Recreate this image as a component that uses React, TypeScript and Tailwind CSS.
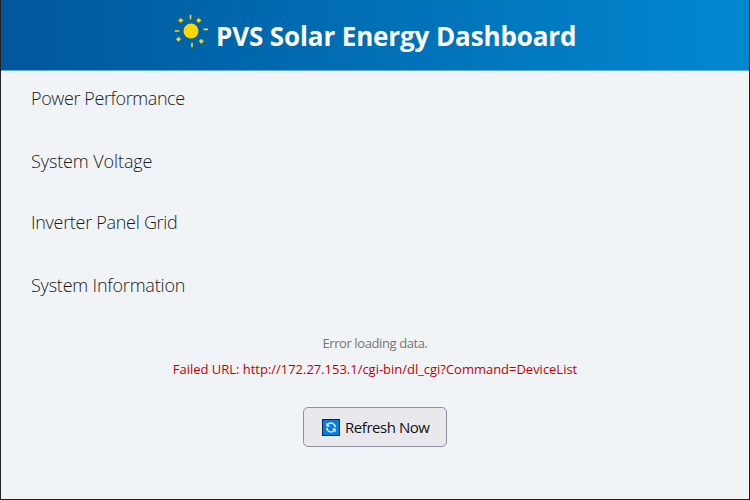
const sections = [
  { title: "Power Performance", style: "h-[63px] tracking-[-0.4px]" },
  { title: "System Voltage", style: "h-[61px] tracking-[-0.1px]" },
  { title: "Inverter Panel Grid", style: "h-[63px] tracking-[-0.29px]" },
  { title: "System Information", style: "h-[61px] tracking-[-0.2px]" },
];

function SunIcon() {
  return (
    <svg width="34" height="34" viewBox="0 0 34 34" fill="#ffd600" className="shrink-0">
      <circle cx="17" cy="17" r="7.5" />
      <path d="M15.7 .8h1.6v4.4h-1.6zM17.2 28.8h1.6v4.4h-1.6zM.9 16.2h4.5v1.6H.9zM29.4 14.6h4.5v1.6h-4.5z" />
      <path
        d="m6.8 4.2 2.2 2.2-2.2 2.2-2.2-2.2zM24.8 4.2l2.2 2.2-2.2 2.2-2.2-2.2zM4.5 23l2.2 2.2-2.2 2.2-2.2-2.2zM27.3 25.1l2.2 2.2-2.2 2.2-2.2-2.2z"
        stroke="#ffd600"
        strokeWidth=".6"
        strokeLinejoin="round"
      />
    </svg>
  );
}

function RefreshIcon() {
  return (
    <svg width="18" height="17" viewBox="0 0 18 17" className="shrink-0">
      <rect x=".5" y=".5" width="17" height="16" fill="#087be0" stroke="#10233f" />
      <g fill="none" stroke="#e8f7ff" strokeWidth="1.4">
        <path d="M6 5.2A4.3 4.3 0 0 1 13.2 8.2" />
        <path d="M12 11.8A4.3 4.3 0 0 1 4.8 8.8" />
      </g>
      <path d="M4.4 3.6v3.8h3.8zM13.6 13.4V9.6H9.8z" fill="#e8f7ff" />
    </svg>
  );
}

export default function App() {
  return (
    <div className="flex h-[500px] w-[750px] flex-col overflow-hidden border-x border-b border-[#222222] bg-[#f0f4f7] font-['Open_Sans','Noto_Sans',sans-serif] whitespace-nowrap">
      <header className="flex h-[71px] shrink-0 border-b border-[#68abda] bg-linear-to-r from-[#01579b] to-[#0288d1] pt-[14px] pl-[173px] text-white">
        <SunIcon />
        <h1 className="ml-[8px] mt-[4px] text-[26px] leading-[36px] font-bold tracking-[-0.12px]">PVS Solar Energy Dashboard</h1>
      </header>
      <main className="flex flex-col">
        <div className="flex flex-col pt-[15px] pl-[30px]">
          {sections.map((section) => (
            <h2 key={section.title} className={`text-[18px] leading-[24px] font-[350] text-[#1a1a1a] ${section.style}`}>
              {section.title}
            </h2>
          ))}
        </div>
        <div className="flex flex-col items-center">
          <p className="text-[13px] leading-[18px] tracking-[-0.4px] text-[#757575]">Error loading data.</p>
          <p className="mt-[8px] text-[13px] leading-[18px] tracking-[-0.02px] text-[#c40000]">
            Failed URL: http://172.27.153.1/cgi-bin/dl_cgi?Command=DeviceList
          </p>
          <button className="mt-[29px] flex h-[40px] w-[144px] items-center rounded-[5px] border border-[#8f8f9d] bg-[#e9e9ed] pl-[18px] text-[#111111]">
            <RefreshIcon />
            <span className="ml-[5px] text-[15px] leading-[20px] tracking-[-0.45px]">Refresh Now</span>
          </button>
        </div>
      </main>
    </div>
  );
}
